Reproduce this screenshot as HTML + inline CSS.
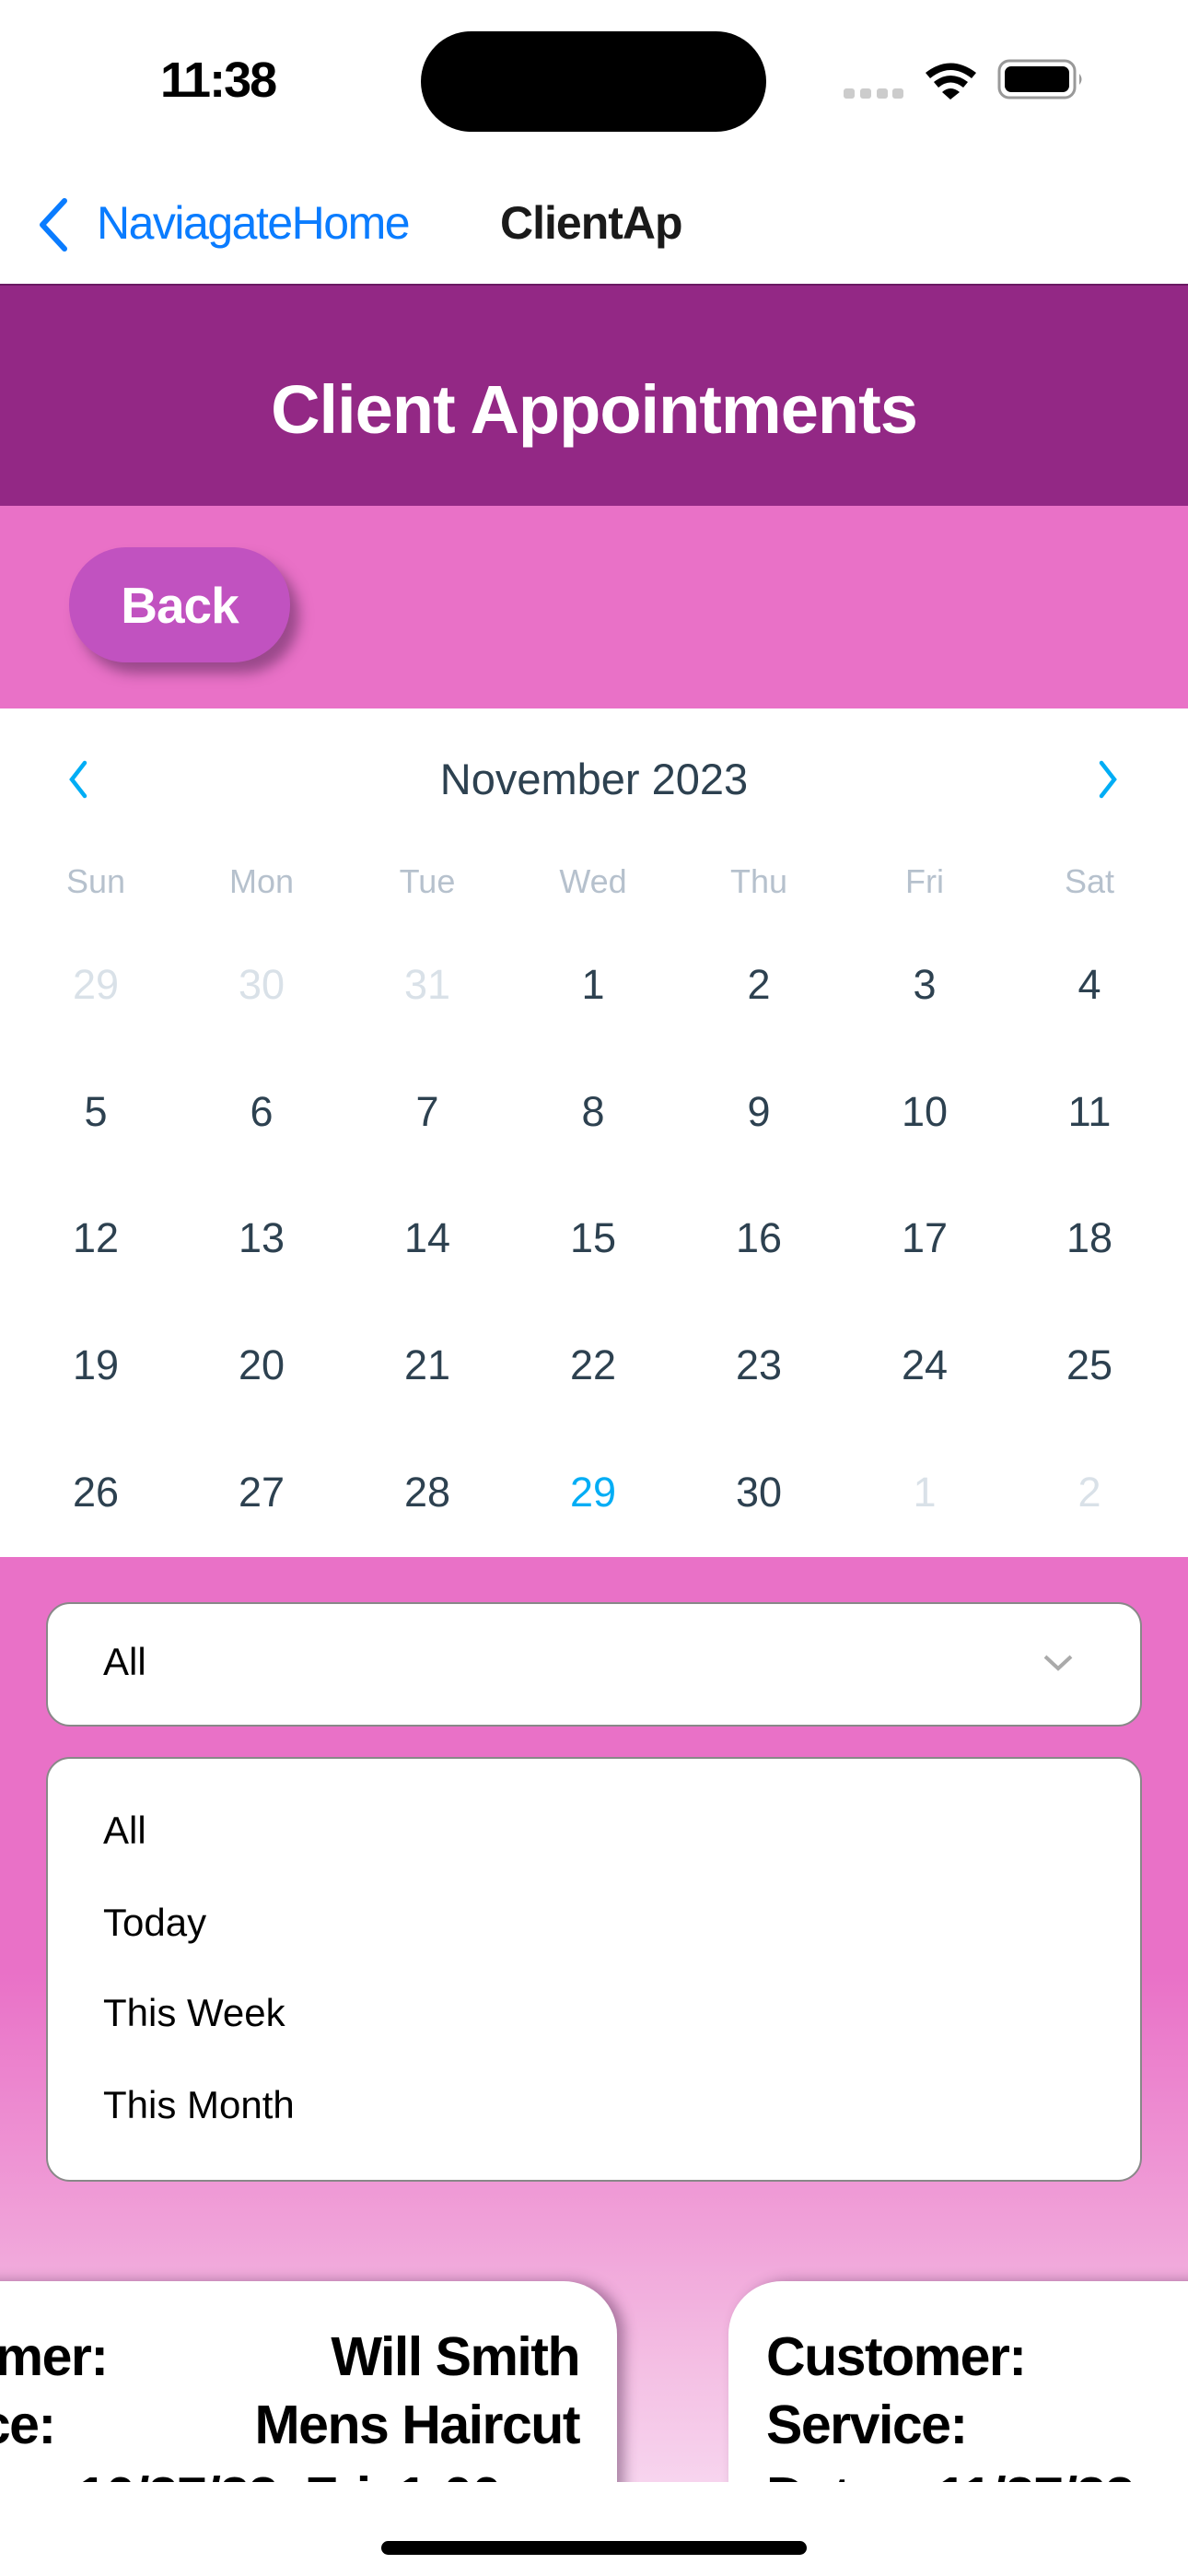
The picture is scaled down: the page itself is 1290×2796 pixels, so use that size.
<!DOCTYPE html>
<html><head><meta charset="utf-8"><style>
*{margin:0;padding:0;box-sizing:border-box}
body{width:1290px;height:2796px;position:relative;overflow:hidden;background:#fff;font-family:"Liberation Sans",sans-serif}
.a{position:absolute;white-space:nowrap}
.cal{color:#2d4150;font-size:45px;width:120px;text-align:center;line-height:50px}
.dn{color:#b6c1cd;font-size:36px;width:120px;text-align:center}
.card{position:absolute;top:2476px;background:#fff;height:400px;border-radius:58px 58px 0 0;box-shadow:8px 0 14px rgba(80,40,80,.45)}
.ct{position:absolute;font-weight:bold;font-size:59px;color:#000;line-height:60px;letter-spacing:-1.5px}
.it{font-size:42px;color:#000}
</style></head><body>
<!-- status bar -->
<div class="a" style="left:174px;top:56px;font-size:54px;font-weight:bold;color:#000;letter-spacing:-2px">11:38</div>
<div class="a" style="left:457px;top:34px;width:375px;height:109px;background:#000;border-radius:55px"></div>
<svg class="a" style="left:900px;top:55px" width="290" height="65" viewBox="900 55 290 65">
<rect x="916" y="96" width="12" height="11" rx="3" fill="#ccc"/><rect x="934" y="96" width="12" height="11" rx="3" fill="#ccc"/><rect x="952" y="96" width="12" height="11" rx="3" fill="#ccc"/><rect x="969" y="96" width="12" height="11" rx="3" fill="#ccc"/>
<path d="M1005 79 Q1032 58 1060 79 L1055 85 Q1032 67 1010 85Z" fill="#000"/>
<path d="M1014 89 Q1032 75 1051 89 L1046 95 Q1032 84 1019 95Z" fill="#000"/>
<path d="M1023 100 Q1032 92 1042 100 L1032 108Z" fill="#000"/>
<rect x="1085" y="66" width="82" height="40" rx="11" fill="none" stroke="#999" stroke-width="3"/>
<rect x="1091" y="72" width="70" height="28" rx="7" fill="#000"/>
<path d="M1172 80 Q1177 86 1172 92Z" fill="#999"/>
</svg>
<!-- nav -->
<svg class="a" style="left:36px;top:214px" width="40" height="60"><path d="M34 4 L10 30 L34 56" fill="none" stroke="#0a7cff" stroke-width="6" stroke-linecap="round" stroke-linejoin="round"/></svg>
<div class="a" style="left:105px;top:213px;font-size:50px;color:#0a7cff;letter-spacing:-1.5px">NaviagateHome</div>
<div class="a" style="left:543px;top:213px;font-size:50px;color:#1a1a1a;font-weight:bold;letter-spacing:-1px">ClientAp</div>
<!-- header -->
<div class="a" style="left:0;top:308px;width:1290px;height:241px;background:#932885;border-top:2px solid #6a1a62"></div>
<div class="a" style="left:0;top:402px;width:1290px;text-align:center;font-size:74px;font-weight:bold;color:#fff;letter-spacing:-1px">Client Appointments</div>
<div class="a" style="left:0;top:549px;width:1290px;height:220px;background:#e971c7"></div>
<div class="a" style="left:75px;top:594px;width:240px;height:125px;border-radius:62px;background:#c152c0;box-shadow:10px 12px 14px rgba(90,40,90,.55)"></div>
<div class="a" style="left:75px;top:625px;width:240px;text-align:center;font-size:55px;font-weight:bold;color:#fff;letter-spacing:-1px">Back</div>
<!-- calendar -->
<svg class="a" style="left:70px;top:824px" width="30" height="44"><path d="M22 4 L8 22 L22 40" fill="none" stroke="#00adf5" stroke-width="4.5" stroke-linecap="round"/></svg>
<svg class="a" style="left:1188px;top:824px" width="30" height="44"><path d="M8 4 L22 22 L8 40" fill="none" stroke="#00adf5" stroke-width="4.5" stroke-linecap="round"/></svg>
<div class="a" style="left:0;top:818px;width:1290px;text-align:center;font-size:47px;color:#2d4150">November 2023</div>
<div class="a dn" style="left:44px;top:936px">Sun</div><div class="a dn" style="left:224px;top:936px">Mon</div><div class="a dn" style="left:404px;top:936px">Tue</div><div class="a dn" style="left:584px;top:936px">Wed</div><div class="a dn" style="left:764px;top:936px">Thu</div><div class="a dn" style="left:944px;top:936px">Fri</div><div class="a dn" style="left:1123px;top:936px">Sat</div>
<div id="g"></div>
<script>
var rows=[[['29',1],['30',1],['31',1],'1','2','3','4'],['5','6','7','8','9','10','11'],['12','13','14','15','16','17','18'],['19','20','21','22','23','24','25'],['26','27','28',['29',2],'30',['1',1],['2',1]]];
var ys=[1044,1182,1319,1457,1595],xs=[44,224,404,584,764,944,1123],h='';
rows.forEach(function(r,i){r.forEach(function(d,j){var t=d,c='';if(Array.isArray(d)){t=d[0];c=d[1]==1?'color:#d9e1e8':'color:#00adf5'}h+='<div class="a cal" style="left:'+xs[j]+'px;top:'+ys[i]+'px;'+c+'">'+t+'</div>'})});
document.getElementById('g').innerHTML=h;
</script>
<!-- lower pink -->
<div class="a" style="left:0;top:1690px;width:1290px;height:1004px;background:linear-gradient(#e971c7 0%,#e971c7 45%,#f0a0d8 72%,#f4c0e4 88%,#f7d4ee 100%)"></div>
<div class="a" style="left:50px;top:1739px;width:1190px;height:135px;background:#fff;border:2px solid #888;border-radius:26px"></div>
<div class="a it" style="left:112px;top:1780px">All</div>
<svg class="a" style="left:1132px;top:1794px" width="34" height="22"><path d="M3 4 L17 17 L31 4" fill="none" stroke="#aaa" stroke-width="4"/></svg>
<div class="a" style="left:50px;top:1907px;width:1190px;height:461px;background:#fff;border:2px solid #888;border-radius:26px"></div>
<div class="a it" style="left:112px;top:1963px">All</div>
<div class="a it" style="left:112px;top:2063px">Today</div>
<div class="a it" style="left:112px;top:2161px">This Week</div>
<div class="a it" style="left:112px;top:2261px">This Month</div>
<!-- cards -->
<div class="a" style="left:0;top:0;width:1290px;height:2694px;overflow:hidden">
<div class="card" style="left:-400px;width:1070px"></div>
<div class="card" style="left:791px;width:700px"></div>
<div class="ct" style="left:-165px;top:2528px">Customer:</div>
<div class="ct" style="left:-158px;top:2602px">Service:</div>
<div class="ct" style="right:661px;top:2528px">Will Smith</div>
<div class="ct" style="right:661px;top:2602px">Mens Haircut</div>
<div class="ct" style="right:661px;top:2680px">10/27/23&nbsp; Fri&nbsp; 1:00pm</div>
<div class="ct" style="left:832px;top:2528px">Customer:</div>
<div class="ct" style="left:832px;top:2602px">Service:</div>
<div class="ct" style="left:832px;top:2680px">Date:&nbsp;&nbsp;&nbsp;11/27/23</div>
</div>
<div class="a" style="left:414px;top:2758px;width:462px;height:15px;border-radius:8px;background:#000"></div>
</body></html>
